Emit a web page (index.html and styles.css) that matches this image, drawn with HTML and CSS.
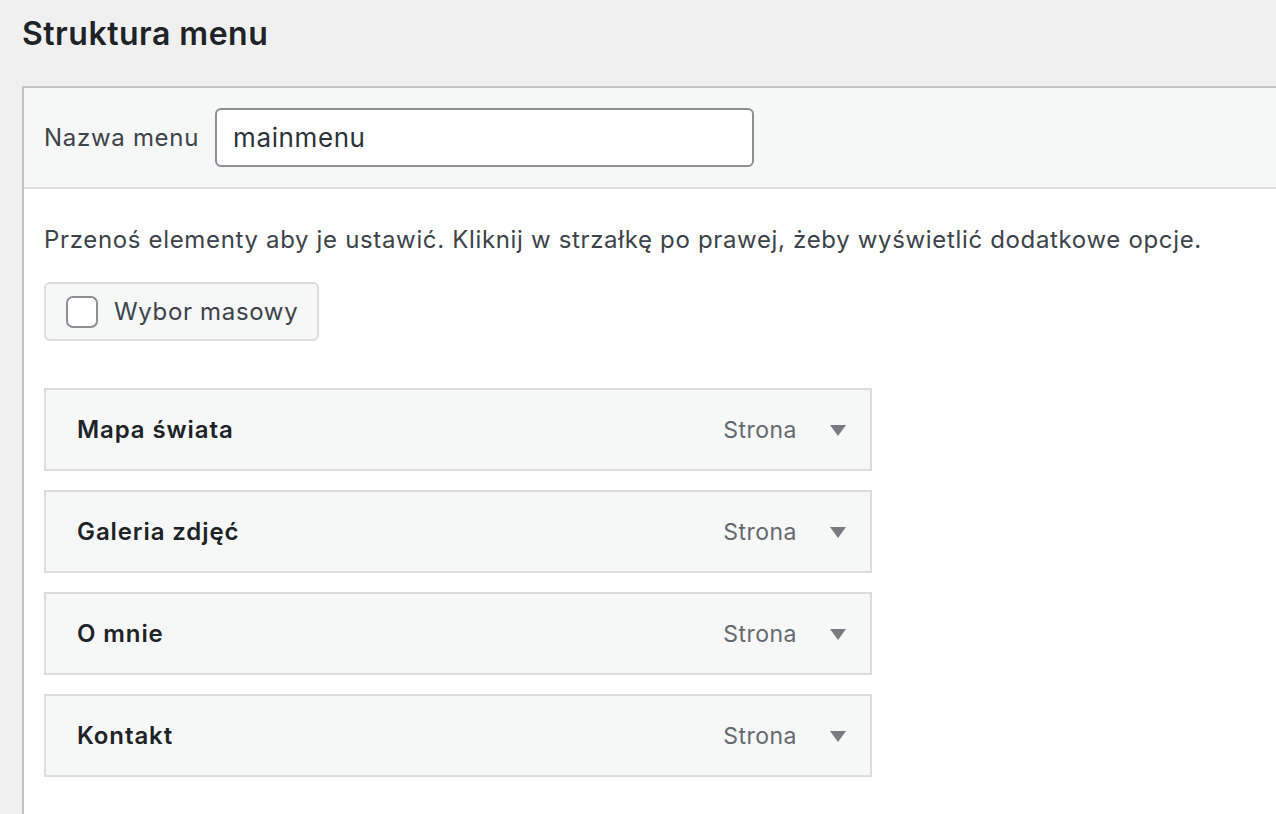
FILE: index.html
```html
<!DOCTYPE html>
<html lang="pl">
<head>
<meta charset="utf-8">
<title>Struktura menu</title>
<link rel="stylesheet" href="styles.css">
</head>
<body>
<h2 class="page-title">Struktura menu</h2>
<div class="panel">
  <div class="panel-header">
    <label class="name-label" for="menu-name">Nazwa menu</label>
    <input class="name-input" id="menu-name" type="text" value="mainmenu">
  </div>
  <div class="panel-body">
    <p class="hint">Przenoś elementy aby je ustawić. Kliknij w strzałkę po prawej, żeby wyświetlić dodatkowe opcje.</p>
    <label class="bulk-btn"><span class="checkbox"></span><span class="bulk-text">Wybor masowy</span></label>
    <ul class="menu-list">
      <li class="menu-item"><span class="item-title">Mapa świata</span><span class="item-type">Strona</span><span class="arrow"></span></li>
      <li class="menu-item"><span class="item-title">Galeria zdjęć</span><span class="item-type">Strona</span><span class="arrow"></span></li>
      <li class="menu-item"><span class="item-title">O mnie</span><span class="item-type">Strona</span><span class="arrow"></span></li>
      <li class="menu-item"><span class="item-title">Kontakt</span><span class="item-type">Strona</span><span class="arrow"></span></li>
    </ul>
  </div>
</div>
</body>
</html>
```
FILE: styles.css
```css
html, body {
  margin: 0;
  padding: 0;
  background: #f0f0f1;
  font-family: Inter, "Noto Sans", "Liberation Sans", sans-serif;
  color: #3c434a;
  overflow: hidden;
}
.page-title {
  margin: 0;
  padding: 14px 0 0 22px;
  height: 86px;
  box-sizing: border-box;
  font-size: 32px;
  font-weight: 600;
  letter-spacing: 0.5px;
  line-height: 40px;
  color: #1d2327;
}
.panel {
  margin-left: 22px;
  margin-right: -10px;
  border-top: 2px solid #c3c4c7;
  border-left: 2px solid #c3c4c7;
  background: #fff;
  height: 760px;
}
.panel-header {
  display: flex;
  align-items: center;
  gap: 16px;
  height: 99px;
  padding-left: 20px;
  background: #f6f7f7;
  border-bottom: 2px solid #dcdcde;
}
.name-label {
  font-size: 24px;
  letter-spacing: 0.7px;
  color: #3c434a;
}
.name-input {
  width: 539px;
  height: 59px;
  box-sizing: border-box;
  border: 2px solid #8c8f94;
  border-radius: 6px;
  padding: 0 16px;
  font-family: inherit;
  font-size: 26px;
  letter-spacing: 0.6px;
  color: #2c3338;
  background: #fff;
  outline: none;
}
.panel-body {
  padding: 20px 20px 0 20px;
}
.hint {
  margin: 0;
  height: 61px;
  line-height: 61px;
  font-size: 24px;
  letter-spacing: 0.66px;
  color: #3c434a;
  white-space: nowrap;
}
.bulk-btn {
  margin-top: 12px;
  display: flex;
  align-items: center;
  gap: 16px;
  width: 275px;
  height: 59px;
  box-sizing: border-box;
  padding-left: 20px;
  background: #f6f7f7;
  border: 2px solid #dcdcde;
  border-radius: 6px;
}
.checkbox {
  width: 32px;
  height: 32px;
  box-sizing: border-box;
  border: 2px solid #8c8f94;
  border-radius: 7px;
  background: #fff;
}
.bulk-text {
  font-size: 24px;
  letter-spacing: 0.66px;
  color: #3c434a;
}
.menu-list {
  list-style: none;
  margin: 47px 0 0 0;
  padding: 0;
  display: flex;
  flex-direction: column;
  gap: 19px;
}
.menu-item {
  display: flex;
  align-items: center;
  width: 828px;
  height: 83px;
  box-sizing: border-box;
  padding: 0 24px 0 31px;
  background: #f6f7f7;
  border: 2px solid #dcdcde;
}
.item-title {
  flex: 1;
  font-size: 24px;
  font-weight: 600;
  letter-spacing: 0.9px;
  color: #1d2327;
}
.item-type {
  font-size: 23px;
  letter-spacing: 0.5px;
  color: #646970;
  margin-right: 33px;
}
.arrow {
  width: 0;
  height: 0;
  border-left: 8px solid transparent;
  border-right: 8px solid transparent;
  border-top: 11px solid #787c82;
  margin-top: 2px;
}
```
